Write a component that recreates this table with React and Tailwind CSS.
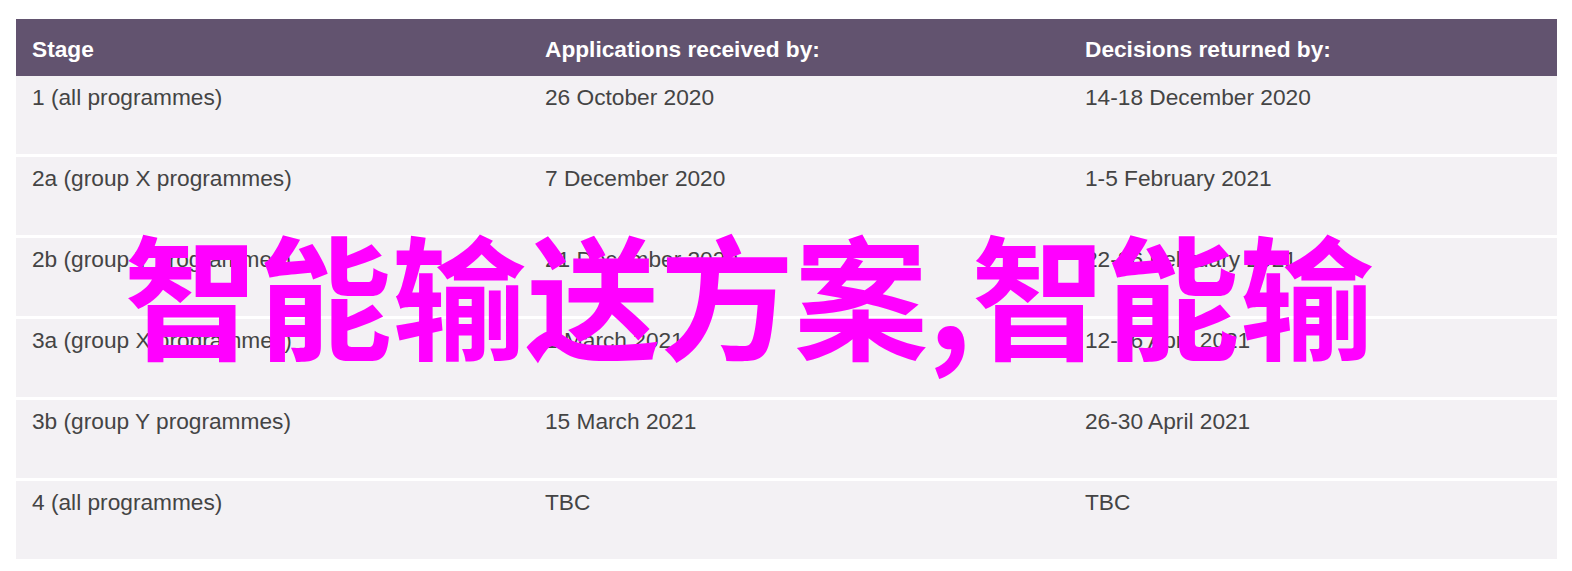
import React from "react";

const rows = [
  ["1 (all programmes)", "26 October 2020", "14-18 December 2020"],
  ["2a (group X programmes)", "7 December 2020", "1-5 February 2021"],
  ["2b (group Y programmes)", "21 December 2020", "22-26 February 2021"],
  ["3a (group X programmes)", "1 March 2021", "12-16 April 2021"],
  ["3b (group Y programmes)", "15 March 2021", "26-30 April 2021"],
  ["4 (all programmes)", "TBC", "TBC"],
];

export default function App() {
  return (
    <div className="relative w-[1572px] h-[571px] bg-white overflow-hidden" style={{ fontFamily: '"Liberation Sans", Arial, sans-serif' }}>
      <div className="pt-[19px] pl-[16px]">
        <div className="w-[1541px] flex flex-col gap-[3px]">
          <div>
            <div className="grid grid-cols-[513px_540px_488px] h-[57px] bg-[#62536f] text-white font-bold text-[22.7px] items-center pt-[3px]">
              <div className="pl-4">Stage</div>
              <div className="pl-4">Applications received by:</div>
              <div className="pl-4">Decisions returned by:</div>
            </div>
            <Row r={rows[0]} />
          </div>
          {rows.slice(1).map((r, i) => (
            <Row key={i} r={r} />
          ))}
        </div>
      </div>
      <div
        className="absolute left-[124px] top-[225px] text-[#ff00ff] font-bold text-[134px] leading-none whitespace-nowrap"
        style={{ fontFamily: '"Noto Sans CJK SC", sans-serif' }}
      >
        智能输送方案,智能输
      </div>
    </div>
  );
}

function Row({ r }) {
  return (
    <div className="grid grid-cols-[513px_540px_488px] h-[78px] bg-[#f3f1f4] text-[#444444] text-[22.7px] leading-[26px] pt-[8px]">
      {r.map((c, i) => (
        <div key={i} className="pl-4">{c}</div>
      ))}
    </div>
  );
}
